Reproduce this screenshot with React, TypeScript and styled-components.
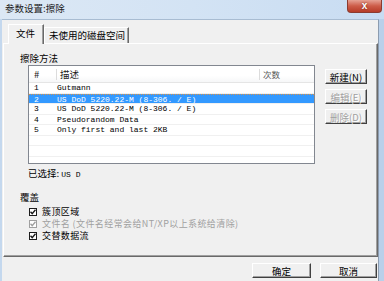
import styled, { createGlobalStyle } from "styled-components";

const GlobalStyle = createGlobalStyle`
  html, body { margin: 0; padding: 0; background: #f0f0f0; }
  body {
    font-family: "Noto Sans CJK SC", "Liberation Sans", sans-serif;
    font-size: 9.5px;
    color: #000;
  }
  * { box-sizing: border-box; }
`;

const methods = [
  { id: "1", name: "Gutmann" },
  { id: "2", name: "US DoD 5220.22-M (8-306. / E)", selected: true },
  { id: "3", name: "US DoD 5220.22-M (8-306. / E)" },
  { id: "4", name: "Pseudorandom Data" },
  { id: "5", name: "Only first and last 2KB" },
  { id: "" },
  { id: "" },
  { id: "" },
];

const options = [
  { label: "簇顶区域" },
  { label: "文件名 (文件名经常会给NT/XP以上系统给清除)", disabled: true },
  { label: "交替数据流" },
];

function App() {
  return (
    <>
      <GlobalStyle />
      <Window>
        <TitleBar>
          <Title>参数设置:擦除</Title>
          <CloseButton>x</CloseButton>
        </TitleBar>
        <Body>
          <TabStrip>
            <Tab $active>文件</Tab>
            <Tab>未使用的磁盘空间</Tab>
          </TabStrip>
          <Pane>
            <GroupLabel>擦除方法</GroupLabel>
            <MethodRow>
              <ListBox>
                <ListHeader>
                  <HeaderCell>#</HeaderCell>
                  <HeaderCell>
                    <Sep />
                    描述
                  </HeaderCell>
                  <HeaderCell $muted>
                    <Sep />
                    次数
                  </HeaderCell>
                </ListHeader>
                {methods.map((m, i) => (
                  <ListRow key={i} $selected={m.selected}>
                    <Cell $first>{m.id}</Cell>
                    <Cell>{m.name}</Cell>
                    <Cell />
                  </ListRow>
                ))}
              </ListBox>
              <SideButtons>
                <ClassicButton $w={42}>新建(N)</ClassicButton>
                <ClassicButton $w={42} disabled>
                  编辑(E)
                </ClassicButton>
                <ClassicButton $w={42} disabled>
                  删除(D)
                </ClassicButton>
              </SideButtons>
            </MethodRow>
            <Selected>
              已选择: <Mono>US D</Mono>
            </Selected>
            <GroupLabel $top={10}>覆盖</GroupLabel>
            <CheckList>
              {options.map((o) => (
                <CheckRow key={o.label} $disabled={o.disabled}>
                  <CheckBox $disabled={o.disabled}>
                    <svg width="6" height="6" viewBox="0 0 6 6">
                      <path
                        d="M0.5 2.8 L2.2 4.6 L5.5 0.8"
                        fill="none"
                        stroke={o.disabled ? "#a0a0a0" : "#1a1a1a"}
                        strokeWidth="1.4"
                      />
                    </svg>
                  </CheckBox>
                  {o.label}
                </CheckRow>
              ))}
            </CheckList>
          </Pane>
          <Footer>
            <ClassicButton $w={59} $h={15}>确定</ClassicButton>
            <ClassicButton $w={57} $h={15}>取消</ClassicButton>
          </Footer>
        </Body>
      </Window>
    </>
  );
}

export default App;

const Window = styled.div`
  width: 384px;
  height: 281px;
  overflow: hidden;
  display: flex;
  flex-direction: column;
  background: linear-gradient(90deg, #c4d8ee, #b9d0ea);
`;

const TitleBar = styled.div`
  height: 19px;
  flex-shrink: 0;
  display: flex;
  justify-content: space-between;
  align-items: flex-start;
  background: linear-gradient(90deg, #dce8f5 0%, #d3e3f4 50%, #c8dcf2 100%);
`;

const Title = styled.div`
  padding-left: 5px;
  line-height: 17px;
  font-size: 9.5px;
  color: #1a1a1a;
`;

const CloseButton = styled.div`
  width: 35px;
  height: 13px;
  margin-right: 2px;
  border: 1px solid #8b3b30;
  border-top: none;
  border-radius: 0 0 4px 4px;
  background: linear-gradient(#e6a294, #cd5c48 50%, #b63c28);
  color: #fff;
  font-family: "Liberation Sans", sans-serif;
  font-weight: bold;
  font-size: 10px;
  line-height: 11px;
  text-align: center;
  text-shadow: 0 0 2px #6b1d12;
`;

const Body = styled.div`
  flex: 1;
  display: flex;
  flex-direction: column;
  margin: 0 5px 0 2px;
  background: #f0f0f0;
  border-top: 1px solid #a8bcd2;
  border-right: 1px solid #8c9cb0;
`;

const TabStrip = styled.div`
  height: 23px;
  flex-shrink: 0;
  display: flex;
  align-items: flex-end;
  padding-left: 6px;
`;

const Tab = styled.div<{ $active?: boolean }>`
  position: relative;
  z-index: ${(p) => (p.$active ? 1 : 0)};
  height: ${(p) => (p.$active ? 20 : 16)}px;
  padding: 0 ${(p) => (p.$active ? 8 : 3)}px 0 ${(p) => (p.$active ? 7 : 4)}px;
  margin-bottom: ${(p) => (p.$active ? -1 : 0)}px;
  background: #f0f0f0;
  border: 1px solid #fff;
  border-bottom: none;
  border-right: 1px solid #696969;
  box-shadow: inset -1px 0 #a0a0a0;
  line-height: ${(p) => (p.$active ? 17 : 14)}px;
  font-size: 9.5px;
`;

const Pane = styled.div`
  height: 214px;
  flex-shrink: 0;
  margin-left: 1px;
  width: 375px;
  padding-left: 16px;
  border: 1px solid;
  border-color: #fff #696969 #696969 #fff;
  box-shadow: inset -1px -1px #a0a0a0;
  display: flex;
  flex-direction: column;
`;

const GroupLabel = styled.div<{ $top?: number }>`
  margin-top: ${(p) => p.$top ?? 8}px;
  line-height: 12px;
  font-size: 9.5px;
`;

const MethodRow = styled.div`
  display: flex;
  margin-top: 1px;
  margin-left: 8px;
`;

const ListBox = styled.div`
  width: 287px;
  height: 99px;
  border: 1px solid #828790;
  background: #fff;
  overflow: hidden;
`;

const ListHeader = styled.div`
  display: grid;
  grid-template-columns: 27px 207px 1fr;
  height: 17px;
  border-bottom: 1px solid #e5e5e5;
  background: linear-gradient(#fff 60%, #f6f7f8);
`;

const HeaderCell = styled.div<{ $muted?: boolean }>`
  display: flex;
  align-items: center;
  padding-left: ${(p) => (p.$muted ? 0 : 4)}px;
  font-size: ${(p) => (p.$muted ? 8.5 : 9.5)}px;
  color: ${(p) => (p.$muted ? "#555" : "#1a1a1a")};
  &:first-child {
    padding-left: 5px;
  }
`;

const Sep = styled.span`
  width: 1px;
  height: 11px;
  background: #dcdcdc;
  margin: 0 3px 0 -4px;
`;

const ListRow = styled.div<{ $selected?: boolean }>`
  display: grid;
  grid-template-columns: 27px 207px 1fr;
  height: 10.5px;
  border-bottom: 1px solid #f0f0f0;
  background: ${(p) => (p.$selected ? "#3399ff" : "#fff")};
  color: ${(p) => (p.$selected ? "#fff" : "#000")};
  border-top: ${(p) => (p.$selected ? "1px dotted #d9924a" : "none")};
  font-family: "Liberation Mono", monospace;
  font-size: 8px;
  line-height: 10px;
  white-space: nowrap;
`;

const Cell = styled.div<{ $first?: boolean }>`
  padding-left: ${(p) => (p.$first ? 5 : 1)}px;
  overflow: hidden;
`;

const SideButtons = styled.div`
  display: flex;
  flex-direction: column;
  gap: 5px;
  margin-left: 10px;
  padding-top: 4px;
`;

const ClassicButton = styled.button<{ $w: number; $h?: number }>`
  width: ${(p) => p.$w}px;
  height: ${(p) => p.$h ?? 15}px;
  padding: 0;
  background: #f0f0f0;
  border: 1px solid;
  border-color: #fff #404040 #404040 #fff;
  box-shadow: inset -1px -1px #a0a0a0;
  font-family: "Noto Sans CJK SC", sans-serif;
  font-size: 9.5px;
  line-height: 12px;
  color: #000;
  &:disabled {
    color: #a0a0a0;
    text-shadow: 1px 1px #fff;
  }
`;

const Selected = styled.div`
  margin-top: 3px;
  margin-left: 8px;
  line-height: 12px;
`;

const Mono = styled.span`
  font-family: "Liberation Mono", monospace;
  font-size: 8px;
`;

const CheckList = styled.div`
  margin-top: 3px;
  margin-left: 9px;
  display: flex;
  flex-direction: column;
`;

const CheckRow = styled.div<{ $disabled?: boolean }>`
  display: flex;
  align-items: center;
  gap: 5px;
  height: 12px;
  line-height: 12px;
  font-size: 9px;
  letter-spacing: 0.4px;
  color: ${(p) => (p.$disabled ? "#a0a0a0" : "#000")};
  white-space: nowrap;
`;

const CheckBox = styled.span<{ $disabled?: boolean }>`
  width: 8px;
  height: 8px;
  flex-shrink: 0;
  display: flex;
  align-items: center;
  justify-content: center;
  background: #fff;
  border: 1px solid ${(p) => (p.$disabled ? "#a0a0a0" : "#1c1c1c")};
`;

const Footer = styled.div`
  display: flex;
  justify-content: flex-end;
  gap: 9px;
  padding-top: 6px;
  padding-right: 1px;
`;
